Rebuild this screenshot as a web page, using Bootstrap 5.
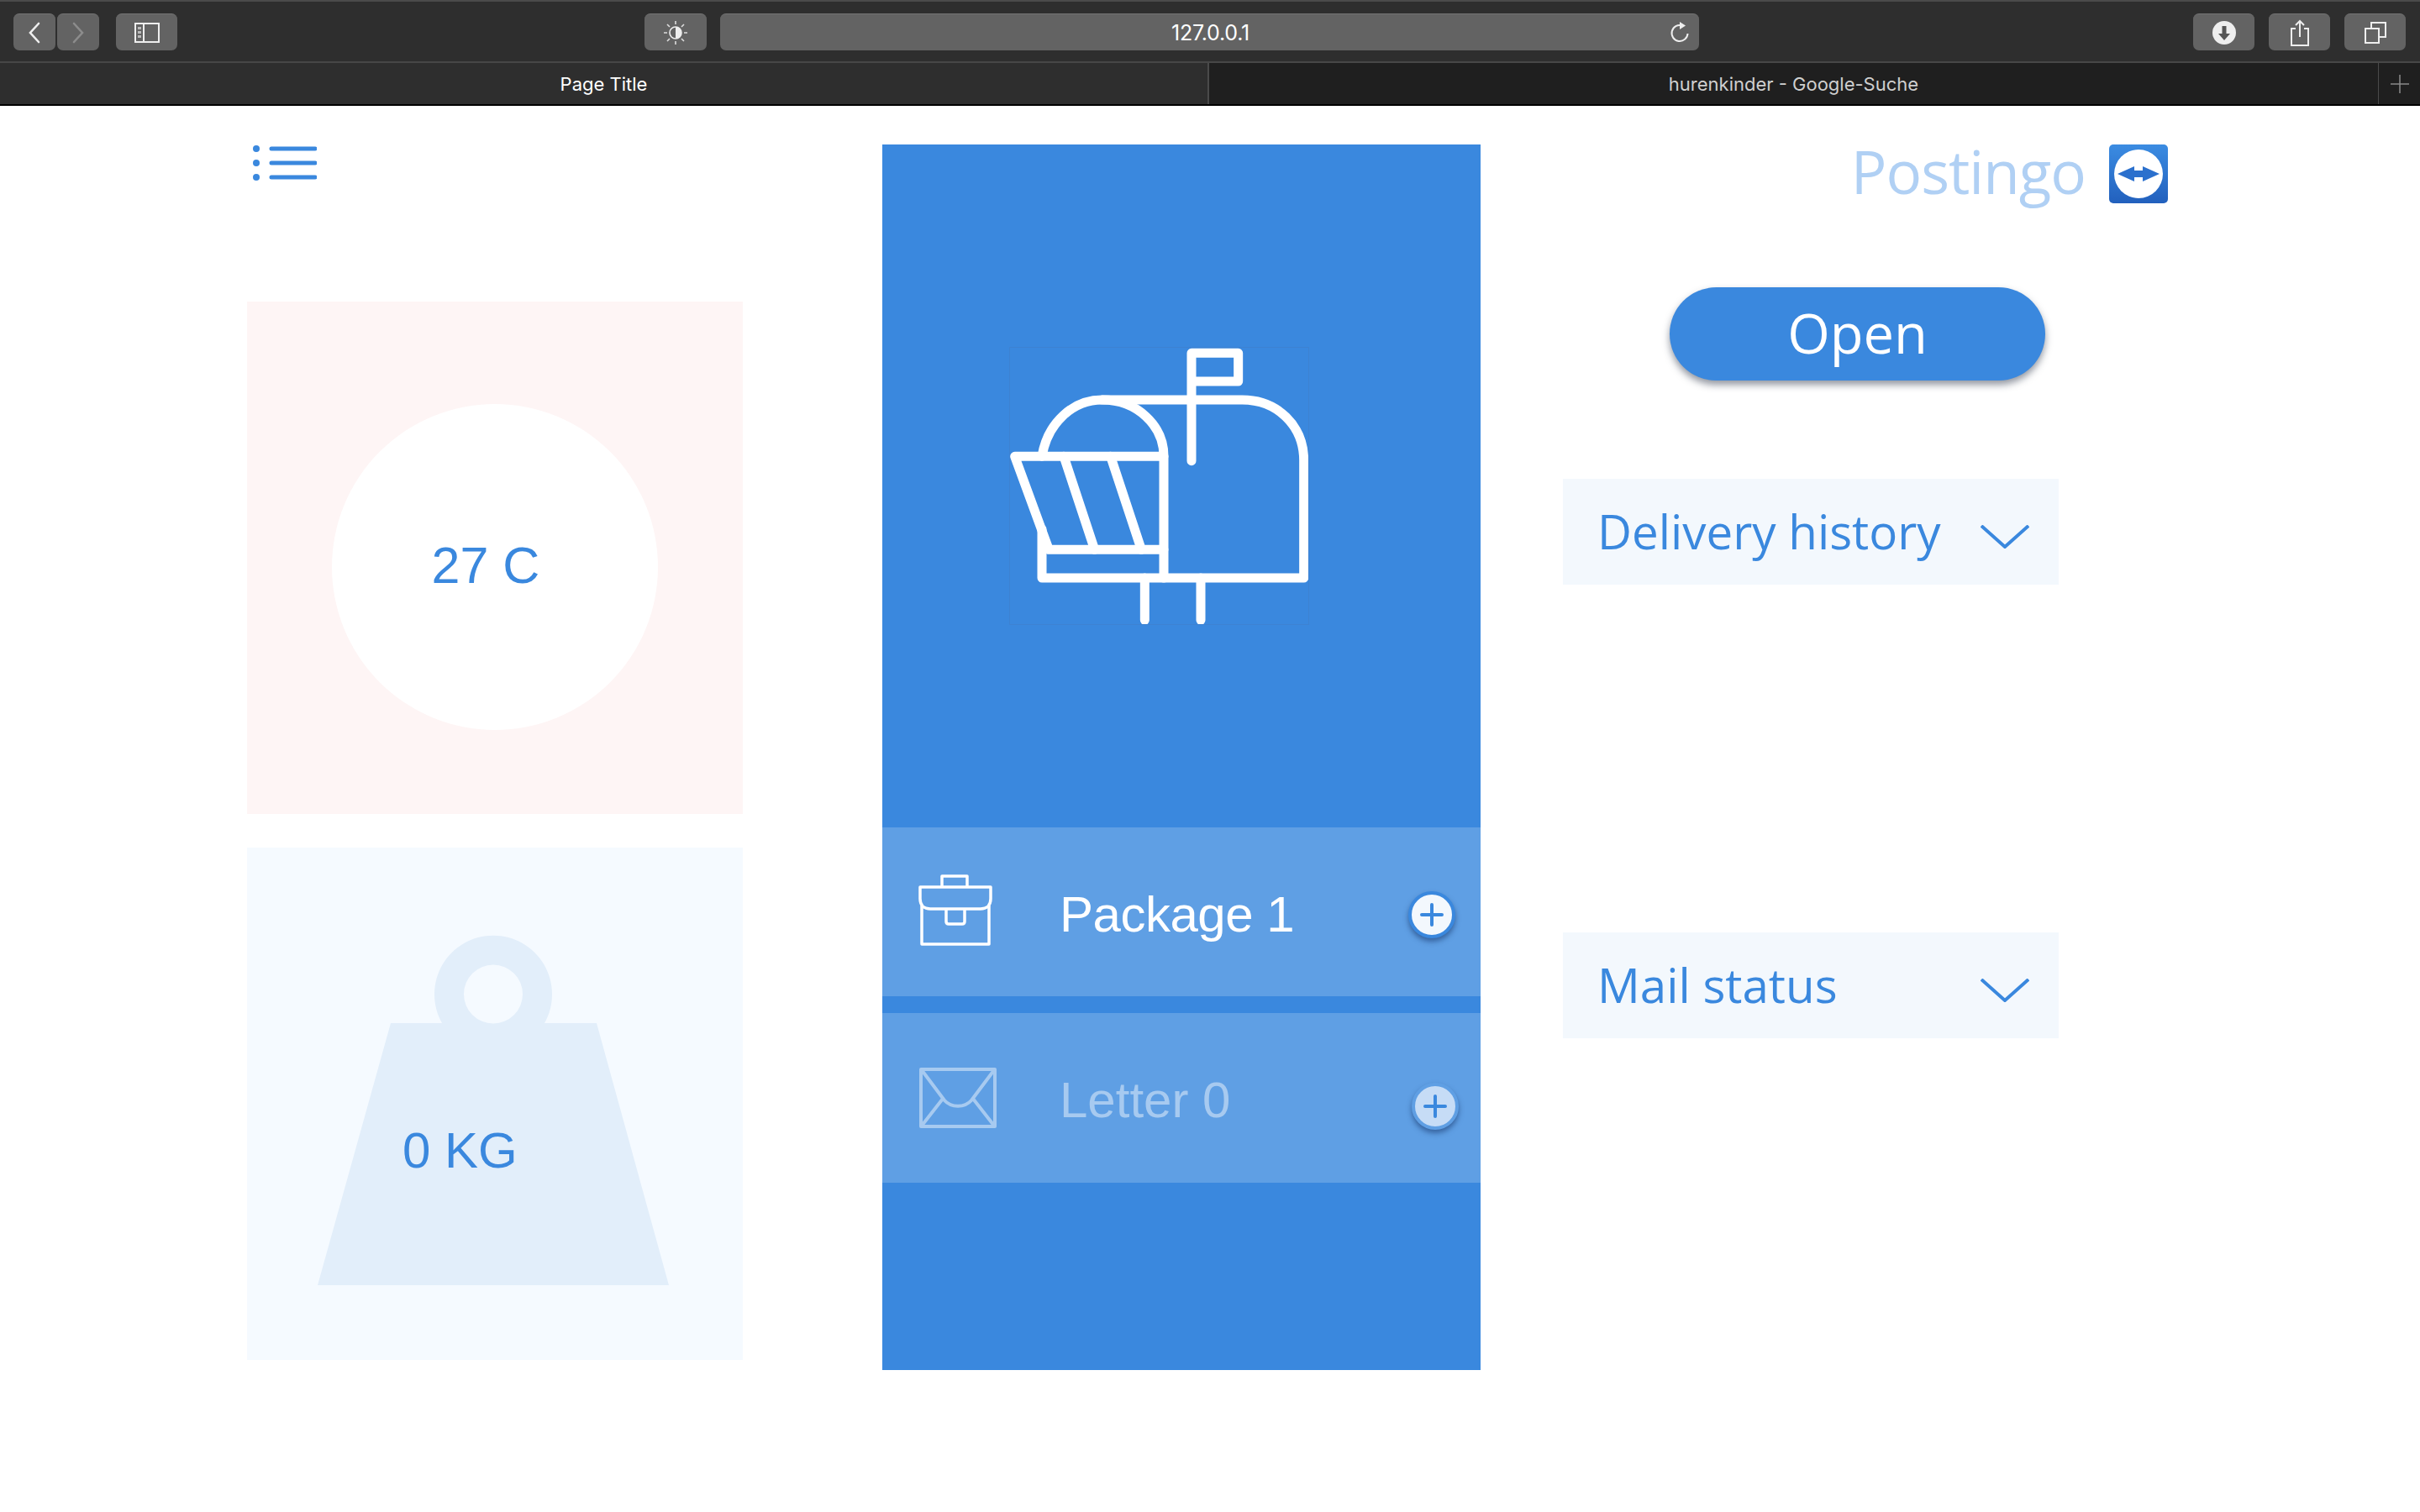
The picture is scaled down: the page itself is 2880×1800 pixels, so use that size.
<!DOCTYPE html>
<html lang="en">
<head>
  <meta charset="UTF-8" />
  <title>Page Title</title>
  <link href="https://cdn.jsdelivr.net/npm/bootstrap@5.3.0/dist/css/bootstrap.min.css" rel="stylesheet">
  <style>
    body { background: #fff; font-family: "Liberation Sans", sans-serif; color: #3a88de; height: 1800px; overflow: hidden; }

    /* browser chrome */
    .toolbar { height: 75px; background: #2e2e2e; border-top: 2px solid #4b4b4b; border-bottom: 2px solid #474747; padding: 14px 16px 0; }
    .tb-btn { height: 44px; background: #636363; border-top: 1px solid #727272; border-radius: 7px; flex: none; }
    .tb-back { width: 50px; margin-right: 2px; }
    .tb-side { width: 73px; margin-left: 18px; margin-right: 556px; }
    .tb-sun { width: 74px; margin-right: 16px; }
    .tb-url { width: 1165px; margin-right: 588px; font: 25px "Inter", sans-serif; color: #fff; letter-spacing: -.25px; position: relative; padding-left: 2px; }
    .tb-reload { position: absolute; right: 10px; top: 8px; }
    .tb-act { width: 73px; margin-right: 17px; }
    .tabbar { height: 51px; background: #1f1f1f; border-bottom: 2px solid #000; font: 22px "Inter", sans-serif; }
    .tab-on { width: 1439px; background: #2e2e2e; color: #fff; border-right: 2px solid #4a4a4a; }
    .tab-off { width: 1392px; color: #cfcfcf; border-right: 1px solid #4a4a4a; }
    .tab-add { width: 49px; }

    /* page */
    .page-wrap { padding-left: 294px; }
    .left-col { width: 590px; padding-top: 46px; }
    .menu-ico { display: block; margin-left: 5px; margin-bottom: 143px; }
    .temp-card { height: 610px; background: #fef5f5; margin-bottom: 40px; padding-top: 22px; }
    .temp-disc { width: 388px; height: 388px; background: #fff; font-size: 61px; padding-right: 22px; padding-bottom: 2px; }
    .weight-card { height: 610px; background: #f5faff; }
    .weight-val { position: absolute; left: 185px; top: 325px; font-size: 60px; line-height: 1.2; }

    .mid-col { width: 712px; height: 1459px; margin-left: 166px; margin-top: 46px; background: #3a88de; }
    .hero-box { height: 813px; padding: 242px 0 0 152px; }
    .hero-ico { display: block; outline: 1px solid rgba(70, 120, 190, .35); }
    .parcel-row { height: 201px; background: #5f9fe4; color: #fff; font-size: 60px; padding-left: 43px; padding-right: 30px; }
    .parcel-row + .parcel-row { margin-top: 20px; height: 202px; padding-right: 26px; }
    .parcel-ico { width: 168px; flex: none; }
    .parcel-pack { margin-left: -1px; margin-top: -6px; margin-right: 1px; }
    .parcel-env { margin-left: 1px; }
    .parcel-name { padding-top: 6px; letter-spacing: -.5px; }
    .parcel-off { opacity: .45; letter-spacing: 0; }
    .add-btn { width: 56px; height: 56px; background: #f3f8fd; border: 4px solid #3a88de; box-shadow: 0 4px 6px rgba(20, 50, 100, .55); margin-top: 6px; flex: none; }
    .add-off { background: #c6dcf6; border-color: #5f9fe4; margin-top: 19px; }

    .right-col { width: 720px; margin-left: 98px; margin-top: 46px; }
    .brand-name { font: 400 71px/70px "Open Sans", sans-serif; letter-spacing: -1px; color: #b0d0f4; margin-right: 28px; margin-top: -6px; }
    .brand-ico { display: block; }
    .open-btn { display: block; width: 447px; height: 111px; margin: 100px 0 0 127px; background: #3a88de; border: 0; color: #fff; font: 400 65px/1 "Open Sans", sans-serif; box-shadow: 0 5px 8px rgba(40, 50, 70, .5); padding: 0 0 2px; }
    .fold-btn { width: 590px; height: 126px; background: #f3f8fd; border: 0; border-radius: 0; color: #3a88de; padding: 0 35px 0 41px; font: 400 56.500px/1 "Open Sans", sans-serif; }
    .fold-first { margin-top: 117px; }
    .fold-second { margin-top: 414px; }
    .fold-ico { margin-top: 12px; }
  </style>
</head>
<body>
  <div class="toolbar d-flex">
    <div class="tb-btn tb-back d-flex align-items-center justify-content-center">
      <svg width="16" height="26" viewBox="0 0 16 26"><path d="M13 2 3 13l10 11" fill="none" stroke="#eee" stroke-width="2.6" stroke-linecap="round"/></svg>
    </div>
    <div class="tb-btn tb-back d-flex align-items-center justify-content-center">
      <svg width="16" height="26" viewBox="0 0 16 26"><path d="M3 2l10 11L3 24" fill="none" stroke="#8c8c8c" stroke-width="2.6" stroke-linecap="round"/></svg>
    </div>
    <div class="tb-btn tb-side d-flex align-items-center justify-content-center">
      <svg width="30" height="24" viewBox="0 0 30 24"><path d="M1 1h28v22H1zM11 1v22" fill="none" stroke="#eee" stroke-width="2"/><path d="M4 5h4v3H4zM4 10h4v3H4zM4 15h4v3H4z" fill="#bbb"/></svg>
    </div>
    <div class="tb-btn tb-sun d-flex align-items-center justify-content-center">
      <svg width="30" height="30" viewBox="0 0 30 30"><circle cx="15" cy="15" r="7" fill="none" stroke="#eee" stroke-width="1.6"/><path d="M15 8a7 7 0 0 1 0 14z" fill="#eee"/><path d="M15 1v4M15 25v4M1 15h4M25 15h4M5 5l3 3M22 22l3 3M25 5l-3 3M8 22l-3 3" stroke="#ddd" stroke-width="1.6"/></svg>
    </div>
    <div class="tb-btn tb-url d-flex align-items-center justify-content-center">127.0.0.1
      <svg class="tb-reload" width="26" height="28" viewBox="0 0 26 28"><path d="M16 5.5A9.5 9.5 0 1 0 22.5 15" fill="none" stroke="#eee" stroke-width="2"/><path d="M13 1l7 4.500-7 4.500z" fill="#eee"/></svg>
    </div>
    <div class="tb-btn tb-act d-flex align-items-center justify-content-center">
      <svg width="28" height="28" viewBox="0 0 28 28"><circle cx="14" cy="14" r="14" fill="#eee"/><path d="M11.500 6h5v9H21l-7 8-7-8h4.500z" fill="#555"/></svg>
    </div>
    <div class="tb-btn tb-act d-flex align-items-center justify-content-center">
      <svg width="24" height="32" viewBox="0 0 24 32"><path d="M7 11H2v20h20V11h-5M12 21V2M7 7l5-5 5 5" fill="none" stroke="#eee" stroke-width="2"/></svg>
    </div>
    <div class="tb-btn tb-act d-flex align-items-center justify-content-center me-0">
      <svg width="26" height="26" viewBox="0 0 26 26"><path d="M1 8h16v17H1z" fill="none" stroke="#eee" stroke-width="2"/><path d="M8 8V1h17v17h-8" fill="none" stroke="#eee" stroke-width="2"/></svg>
    </div>
  </div>
  <div class="tabbar d-flex">
    <div class="tab-on d-flex align-items-center justify-content-center">Page Title</div>
    <div class="tab-off d-flex align-items-center justify-content-center">hurenkinder - Google-Suche</div>
    <div class="tab-add d-flex align-items-center justify-content-center">
      <svg width="22" height="22" viewBox="0 0 22 22"><path d="M11 0v22M0 11h22" stroke="#8a8a8a" stroke-width="1.500"/></svg>
    </div>
  </div>

  <div class="page-wrap d-flex align-items-start">
    <div class="left-col">
      <svg class="menu-ico" width="78" height="44" viewBox="0 0 78 44">
        <g fill="#3a88de"><circle cx="6" cy="5" r="4"/><circle cx="6" cy="22" r="4"/><circle cx="6" cy="39" r="4"/></g>
        <path d="M24 5h52M24 22h52M24 39h52" stroke="#3a88de" stroke-width="5" stroke-linecap="round"/>
      </svg>
      <div class="temp-card d-flex align-items-center justify-content-center">
        <div class="temp-disc rounded-circle d-flex align-items-center justify-content-center">27 C</div>
      </div>
      <div class="weight-card position-relative">
        <svg class="d-block" width="590" height="610" viewBox="0 0 590 610">
          <path fill-rule="evenodd" fill="#e2eefa" d="M171 209H232A70 70 0 1 1 354 209H416L502 521H84zM293 139.500a35 35 0 1 0 0 70 35 35 0 0 0 0-70z"/>
        </svg>
        <div class="weight-val">0 KG</div>
      </div>
    </div>

    <div class="mid-col">
      <div class="hero-box">
        <svg class="hero-ico" width="355" height="329" viewBox="186 102 1065 987">
          <g fill="none" stroke="#fff" stroke-width="33" stroke-linecap="round" stroke-linejoin="round">
            <path d="M834 506V121h167v101H834"/>
            <path d="M300 490C320 370 410 288 515 288C640 288 735 380 735 490V924"/>
            <path d="M515 288H1015C1140 288 1235 380 1235 505V924H300V750"/>
            <path d="M735 490H203L325 823H735"/>
            <path d="M378 490 488 823M545 490 655 823"/>
            <path d="M667 924V1075M867 924V1075"/>
          </g>
        </svg>
      </div>
      <div class="parcel-row d-flex align-items-center">
        <div class="parcel-ico">
          <svg class="d-block parcel-pack" width="90" height="86" viewBox="0 0 90 86">
            <g fill="none" stroke="#fff" stroke-width="3.500" stroke-linejoin="round">
              <path d="M3 16h84v14c0 8-5 12-12 12H15C8 42 3 38 3 30z"/>
              <path d="M29 15V3h30v12"/>
              <path d="M5 38v46h80V38"/>
              <path d="M34 43v14c0 2 1 3 3 3h16c2 0 3-1 3-3V43"/>
            </g>
          </svg>
        </div>
        <div class="parcel-name">Package 1</div>
        <div class="add-btn rounded-circle d-flex align-items-center justify-content-center ms-auto">
          <svg width="28" height="28" viewBox="0 0 28 28"><path d="M14 2v24M2 14h24" stroke="#3a88de" stroke-width="4" stroke-linecap="round"/></svg>
        </div>
      </div>
      <div class="parcel-row d-flex align-items-center">
        <div class="parcel-ico parcel-off">
          <svg class="d-block parcel-env" width="92" height="72" viewBox="0 0 92 72">
            <g fill="none" stroke="#fff" stroke-width="4" stroke-linejoin="round">
              <path d="M2 2h88v68H2z"/>
              <path d="M3 3l27 36c8 9 24 9 32 0L89 3"/>
              <path d="M28 37 3 69M64 37 89 69"/>
            </g>
          </svg>
        </div>
        <div class="parcel-name parcel-off">Letter 0</div>
        <div class="add-btn add-off rounded-circle d-flex align-items-center justify-content-center ms-auto">
          <svg width="28" height="28" viewBox="0 0 28 28"><path d="M14 2v24M2 14h24" stroke="#3a88de" stroke-width="4" stroke-linecap="round"/></svg>
        </div>
      </div>
    </div>

    <div class="right-col">
      <div class="d-flex justify-content-end align-items-center">
        <div class="brand-name">Postingo</div>
        <svg class="brand-ico" width="70" height="70" viewBox="0 0 70 70">
          <defs><linearGradient id="tvGrad" x1="0" y1="0" x2="0" y2="1"><stop offset="0" stop-color="#3b8ce2"/><stop offset="1" stop-color="#2260bd"/></linearGradient></defs>
          <rect width="70" height="70" rx="5" fill="url(#tvGrad)"/>
          <circle cx="35" cy="35" r="29" fill="#fff"/>
          <path d="M10 35 30 26v5h10v-5l20 9-20 9v-5H30v5z" fill="#2b70cd"/>
        </svg>
      </div>
      <button class="open-btn btn rounded-pill" type="button">Open</button>
      <button class="fold-btn fold-first btn d-flex align-items-center justify-content-between" type="button">
        <span>Delivery history</span>
        <svg class="fold-ico" width="58" height="28" viewBox="0 0 58 28"><path d="M1 1 29 26 57 1" fill="none" stroke="#3a88de" stroke-width="4"/></svg>
      </button>
      <button class="fold-btn fold-second btn d-flex align-items-center justify-content-between" type="button">
        <span>Mail status</span>
        <svg class="fold-ico" width="58" height="28" viewBox="0 0 58 28"><path d="M1 1 29 26 57 1" fill="none" stroke="#3a88de" stroke-width="4"/></svg>
      </button>
    </div>
  </div>

  <script src="https://cdn.jsdelivr.net/npm/bootstrap@5.3.0/dist/js/bootstrap.bundle.min.js"></script>
</body>
</html>
